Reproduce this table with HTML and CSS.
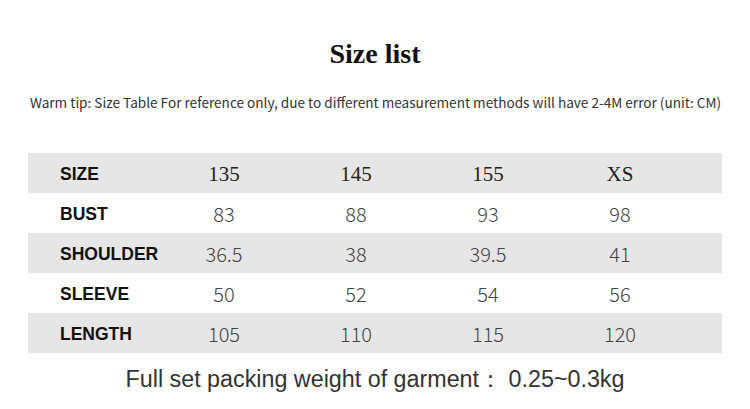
FILE: index.html
```html
<!DOCTYPE html>
<html lang="en">
<head>
<meta charset="utf-8">
<title>Size list</title>
<link rel="stylesheet" href="styles.css">
</head>
<body>
<main class="page">
  <h1 class="title">Size list</h1>
  <p class="tip">Warm tip: Size Table For reference only, due to different measurement methods will have 2-4M error (unit: CM)</p>
  <div class="table">
    <div class="row grey head">
      <span class="label">SIZE</span><span class="cell">135</span><span class="cell">145</span><span class="cell">155</span><span class="cell">XS</span>
    </div>
    <div class="row">
      <span class="label">BUST</span><span class="cell">83</span><span class="cell">88</span><span class="cell">93</span><span class="cell">98</span>
    </div>
    <div class="row grey">
      <span class="label">SHOULDER</span><span class="cell">36.5</span><span class="cell">38</span><span class="cell">39.5</span><span class="cell">41</span>
    </div>
    <div class="row">
      <span class="label">SLEEVE</span><span class="cell">50</span><span class="cell">52</span><span class="cell">54</span><span class="cell">56</span>
    </div>
    <div class="row grey">
      <span class="label">LENGTH</span><span class="cell">105</span><span class="cell">110</span><span class="cell">115</span><span class="cell">120</span>
    </div>
  </div>
  <p class="weight">Full set packing weight of garment： 0.25~0.3kg</p>
</main>
</body>
</html>
```
FILE: styles.css
```css
* { box-sizing: border-box; }
html, body { margin: 0; padding: 0; background: #fff; }
.page {
  width: 750px;
  height: 409px;
  padding-top: 37px;
  display: flex;
  flex-direction: column;
  align-items: stretch;
}
.title {
  margin: 0;
  font-family: "Liberation Serif", serif;
  font-weight: bold;
  font-size: 28px;
  line-height: 34px;
  color: #111;
  text-align: center;
}
.tip {
  margin: 21px 0 0 30px;
  font-family: "Noto Sans CJK SC", "Noto Sans", sans-serif;
  font-size: 13.6px;
  line-height: 20px;
  color: #333;
  white-space: nowrap;
}
.table {
  margin: 41px 28px 0 28px;
  display: flex;
  flex-direction: column;
}
.row {
  display: grid;
  grid-template-columns: 130px repeat(4, 132px) 1fr;
  height: 40px;
  align-items: center;
}
.row.grey { background: #e6e6e6; }
.label {
  padding-left: 32px;
  padding-top: 2px;
  font-family: "Liberation Sans", Arial, sans-serif;
  font-weight: bold;
  font-size: 17.5px;
  color: #111;
}
.cell {
  text-align: center;
  font-family: "Noto Sans CJK SC", "Noto Sans", sans-serif;
  font-weight: 300;
  font-size: 20px;
  color: #444;
}
.head .cell {
  font-family: "Liberation Serif", serif;
  font-weight: normal;
  font-size: 21px;
  color: #222;
  padding-top: 2px;
}
.weight {
  margin: 13px 0 0 0;
  font-family: "Liberation Sans", Arial, sans-serif;
  font-size: 23.3px;
  line-height: 26px;
  color: #333;
  text-align: center;
  white-space: nowrap;
}
```
